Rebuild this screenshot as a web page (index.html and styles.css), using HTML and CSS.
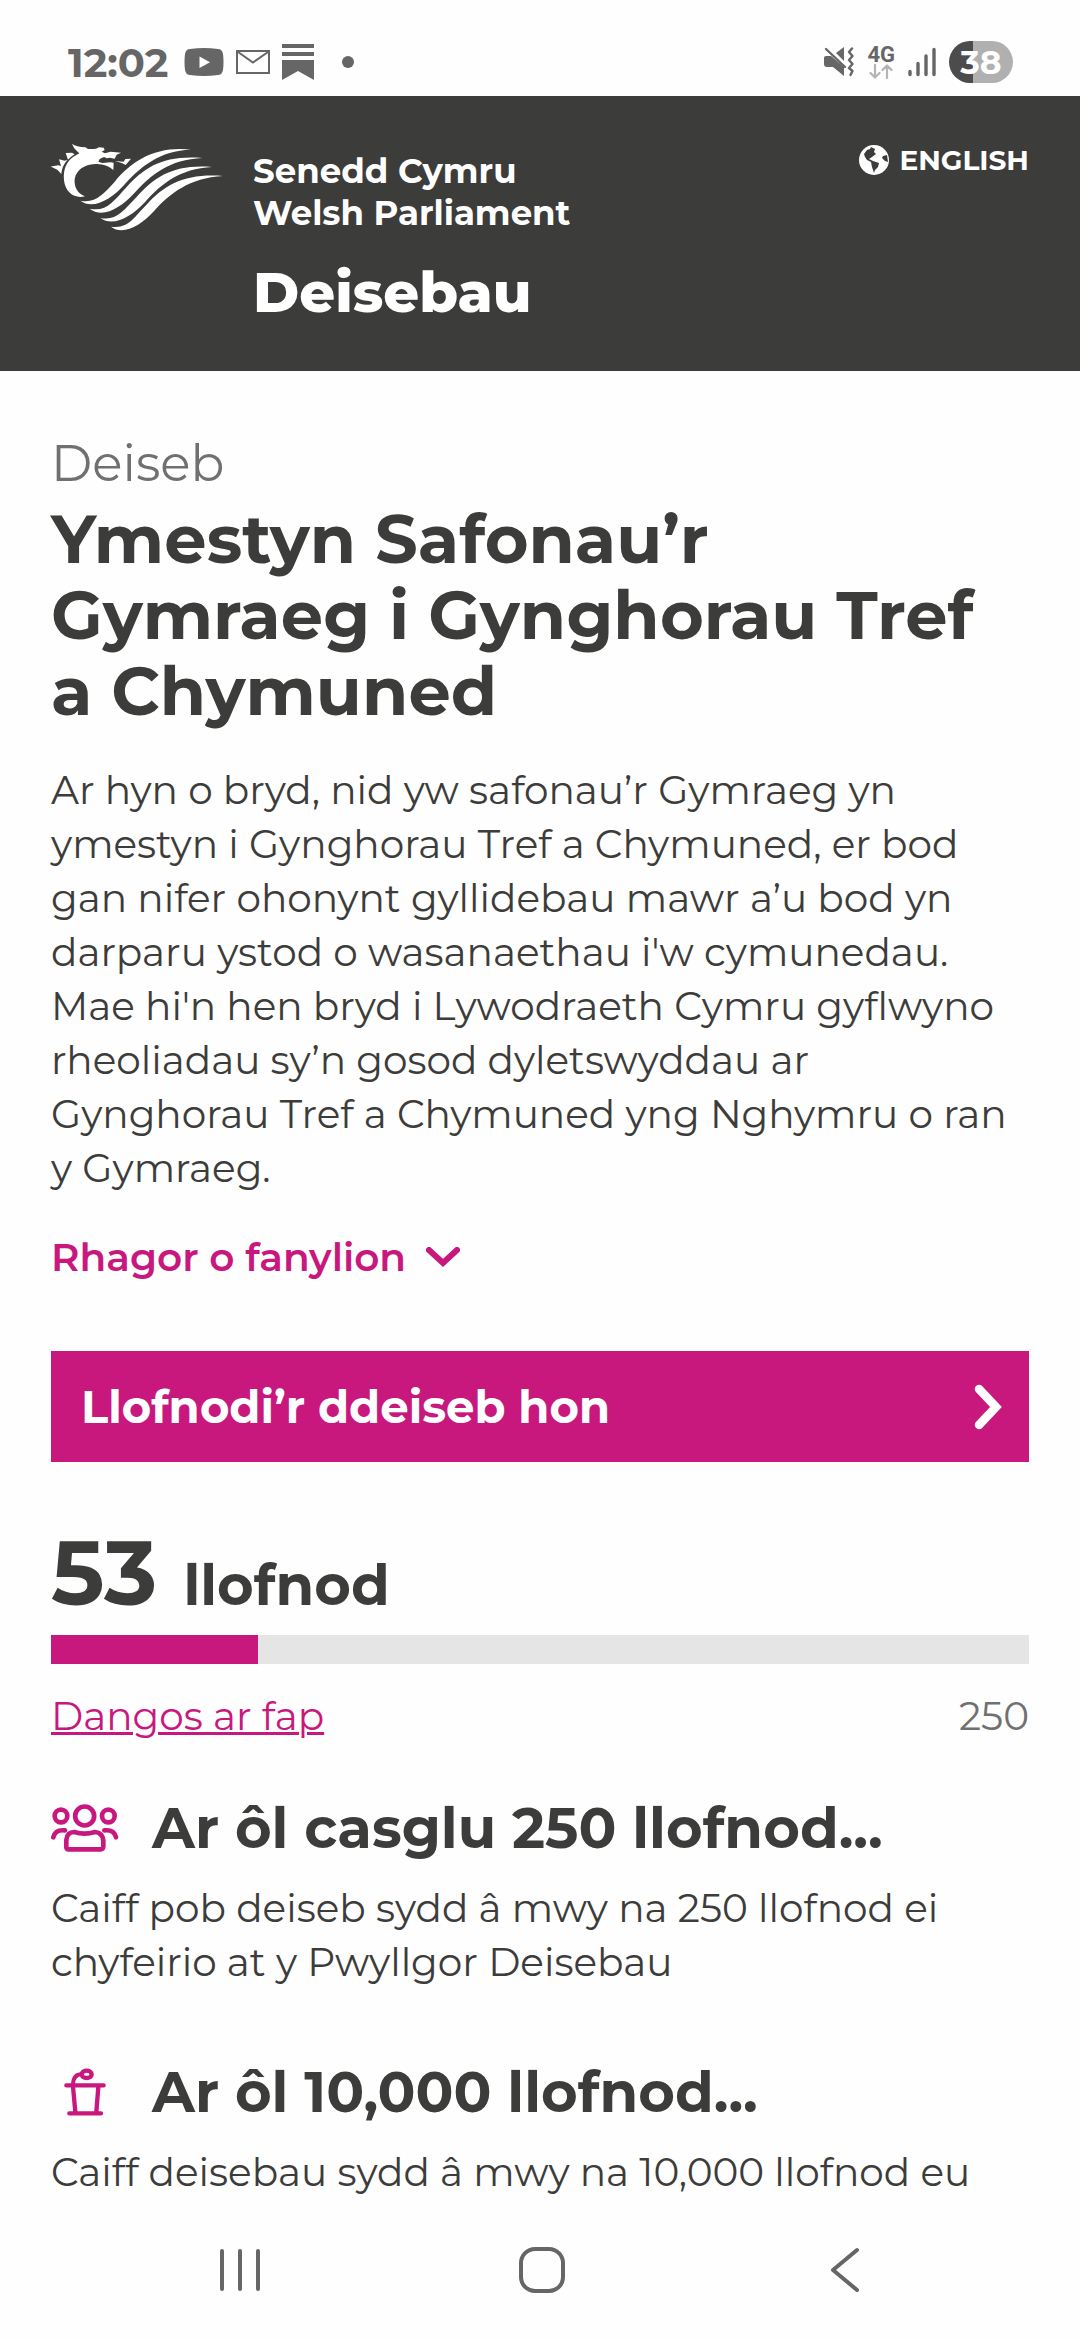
FILE: index.html
```html
<!DOCTYPE html>
<html lang="cy">
<head>
    <meta charset="UTF-8">
    <meta name="viewport" content="width=device-width, initial-scale=1.0">
    <title>Deisebau - Senedd Cymru</title>
    <link rel="stylesheet" href="styles.css">
</head>
<body>
    <!-- Phone status bar -->
    <div class="status-bar">
        <div class="status-left">
            <span class="clock">12:02</span>
            <svg width="40" height="28" viewBox="0 0 40 28"><path fill="#666" d="M6 1Q20-1 34 1 38 1 39 6 40 14 39 22 38 27 34 27 20 29 6 27 2 27 1 22 0 14 1 6 2 1 6 1Z"/><path fill="#fff" d="M15.500 8.500V20L26 14.200Z"/></svg>
            <svg width="34" height="24" viewBox="0 0 34 24" fill="none" stroke="#666" stroke-width="2"><path d="M1 1H33V23H1Z"/><path d="M2 2 17 12.500 32 2"/></svg>
            <svg width="32" height="36" viewBox="0 0 32 36" fill="#666"><path d="M0 0H32V4H0ZM0 8H32V12H0ZM0 16H32V36L16 27 0 36Z"/></svg>
            <span class="dot"></span>
        </div>
        <div class="status-right">
            <svg width="30" height="30" viewBox="0 0 30 30"><path fill="#666" d="M2 9H7L20 20V29L9 20H3Q0 20 0 17V11Q0 9 2 9ZM12 6 20 0V14Z"/><path fill="none" stroke="#666" stroke-width="2.400" stroke-linecap="round" d="M2 2 21 20"/><path fill="none" stroke="#666" stroke-width="2.400" stroke-linecap="round" stroke-linejoin="round" d="M28 1.500 25 5 28.500 9 25 13 28.500 17 25 21 28.500 24 26.500 28"/></svg>
            <div class="network">
                <span>4G</span>
                <svg width="24" height="15" viewBox="0 0 24 15" fill="none" stroke="#b4b4b4" stroke-width="2.200" stroke-linecap="round" stroke-linejoin="round"><path d="M6 1V13M1.500 9 6 13.500 10.500 9M18 14V2M13.500 6 18 1.500 22.500 6"/></svg>
            </div>
            <svg width="28" height="30" viewBox="0 0 28 30" stroke="#666" stroke-width="3.400" stroke-linecap="round"><path d="M2 24.500V27.500M10 16.500V27.500M18 9V27.500M26 2.500V27.500"/></svg>
            <span class="battery">38</span>
        </div>
    </div>

    <header class="site-header">
        <svg class="logo" viewBox="34 40 516 264" fill="#fff" role="img" aria-label="Senedd Cymru">
            <path d="M136 200C106 208 77 190 73 152 70 119 80 98 100 82L119 71Q109 62 103 55L97 42Q110 52 137 53L145 58Q157 59 169 57L178 53 192 54 195 61 186 66 196 71 213 66 244 69 231 75 225 87 210 84 202 86 193 82 180 88 176 96 188 100 213 98 222 99 221 121C203 105 182 103 166 103 133 105 110 121 105 148 103 172 113 191 136 200Z"/>
            <path d="M33 111 56 107 64 109 58 89 75 93 85 90 78 70 97 69 105 74C80 91 68 106 65 133L53 120Z"/>
            <path d="M226 94 252 96 257 88 274 87 258 106 246 100Z"/>
            <path d="M122 213C166 222 192 194 224 158 278 91 349 49 454 60 361 62 301 112 254 165 217 207 160 242 122 213Z"/>
            <path d="M150 237C201 247 221 215 259 174 315 112 371 76 488 85 389 89 334 136 285 189 244 234 189 268 150 237Z"/>
            <path d="M182 265C229 274 249 246 290 203 347 138 407 103 517 112 421 116 364 164 317 216 276 261 220 293 182 265Z"/>
            <path d="M214 291C267 299 284 261 319 227 378 161 439 131 551 139 449 144 391 192 344 243 303 289 249 318 214 291Z"/>
        </svg>
        <div class="brand">
            <p class="brand-name">Senedd Cymru<br>Welsh Parliament</p>
            <p class="brand-section">Deisebau</p>
        </div>
        <a class="language" href="#">
            <svg width="30" height="30" viewBox="0 0 30 30"><circle cx="15" cy="15" r="15" fill="#fff"/><path fill="#3c3c3a" d="M5 9 8 5 11 4 12 2 16 4 15 7 17 9 13 12 10 14 14 16 20 18 19 22 16 25 15 28 13 22 12 17 8 15 6 12ZM24 11 28 10 29 17 26 16 23 13Z"/></svg>
            <span>ENGLISH</span>
        </a>
    </header>

    <main class="petition">
        <p class="label">Deiseb</p>
        <h1>Ymestyn Safonau’r<br>Gymraeg i Gynghorau Tref<br>a Chymuned</h1>
        <p class="text">Ar hyn o bryd, nid yw safonau’r Gymraeg yn<br>
            ymestyn i Gynghorau Tref a Chymuned, er bod<br>
            gan nifer ohonynt gyllidebau mawr a’u bod yn<br>
            darparu ystod o wasanaethau i'w cymunedau.<br>
            Mae hi'n hen bryd i Lywodraeth Cymru gyflwyno<br>
            rheoliadau sy’n gosod dyletswyddau ar<br>
            Gynghorau Tref a Chymuned yng Nghymru o ran<br>
            y Gymraeg.</p>

        <button class="more" type="button">
            Rhagor o fanylion
            <svg width="34" height="21" viewBox="0 0 34 21" fill="none" stroke="#c8187d" stroke-width="6" stroke-linecap="round"><path d="M3 3 17 16 31 3"/></svg>
        </button>

        <a class="sign" href="#">
            Llofnodi’r ddeiseb hon
            <svg width="28" height="46" viewBox="0 0 28 46" fill="none" stroke="#fff" stroke-width="8.500" stroke-linecap="round"><path d="M5 5 22 23 5 41"/></svg>
        </a>

        <p class="count"><span class="number">53</span> <span class="unit">llofnod</span></p>
        <div class="bar" role="progressbar" aria-label="Llofnodion" aria-valuenow="53" aria-valuemin="0" aria-valuemax="250">
            <div class="bar-fill" style="width: 21.2%"></div>
        </div>
        <div class="bar-info">
            <a href="#">Dangos ar fap</a>
            <span>250</span>
        </div>

        <section class="step">
            <h2>
                <svg width="68" height="48" viewBox="0 0 204 144" fill="none" stroke="#c8187d" stroke-width="14" stroke-linecap="round"><circle cx="101" cy="36" r="28.500"/><circle cx="30" cy="36" r="19"/><circle cx="172" cy="36" r="19"/><path d="M7 100Q12 76 42 79M195 100Q190 76 160 79"/><path stroke-linejoin="round" d="M52 136Q45 136 46 126V108Q48 84 70 84 100 94 132 84 155 86 157 110V126Q157 136 149 136Z"/></svg>
                Ar ôl casglu 250 llofnod...
            </h2>
            <p class="text">Caiff pob deiseb sydd â mwy na 250 llofnod ei<br>chyfeirio at y Pwyllgor Deisebau</p>
        </section>

        <section class="step">
            <h2>
                <svg width="68" height="48" viewBox="0 0 204 144" fill="none" stroke="#c8187d" stroke-width="13" stroke-linecap="round"><path d="M46 52H158M55 136H150M66 56 73 132M142 56 136 132"/><path stroke-width="12" d="M66 48Q68 19 91 19"/><ellipse cx="107" cy="19" rx="15" ry="11"/></svg>
                Ar ôl 10,000 llofnod...
            </h2>
            <p class="text">Caiff deisebau sydd â mwy na 10,000 llofnod eu</p>
        </section>
    </main>

    <!-- Phone navigation -->
    <nav class="phone-nav">
        <button type="button" aria-label="Recent apps">
            <svg width="48" height="48" viewBox="0 0 48 48" fill="none" stroke="#666" stroke-width="4" stroke-linecap="round"><path d="M6 5V43M24 5V43M42 5V43"/></svg>
        </button>
        <button type="button" aria-label="Home">
            <svg width="48" height="48" viewBox="0 0 48 48" fill="none" stroke="#666" stroke-width="4"><rect x="3" y="3" width="42" height="42" rx="14"/></svg>
        </button>
        <button type="button" aria-label="Back">
            <svg width="48" height="48" viewBox="0 0 48 48" fill="none" stroke="#666" stroke-width="4" stroke-linecap="round" stroke-linejoin="round"><path d="M37 4 13 24 37 44"/></svg>
        </button>
    </nav>
</body>
</html>
```
FILE: styles.css
```css
:root {
    --accent-color: #c8187d;
    --dark-color: #3c3c3a;
    --grey-color: #707070;
    --status-color: #666666;
}

* {
    box-sizing: border-box;
}

body {
    font-family: Montserrat, Inter, sans-serif;
    background-color: #fefefe;
    color: var(--dark-color);
    margin: 0;
    min-height: 100vh;
    display: flex;
    flex-direction: column;
}

h1, h2, p {
    margin: 0;
}

svg {
    display: block;
    flex: none;
}

button {
    font-family: inherit;
    background: none;
    border: none;
    padding: 0;
    cursor: pointer;
}

/* Status bar */
.status-bar {
    padding: 28px 67px 0 68px;
    display: flex;
    justify-content: space-between;
    color: var(--status-color);
}

.status-left,
.status-right {
    height: 68px;
    display: flex;
    align-items: center;
}

.status-left {
    gap: 12px;
}

.status-right {
    gap: 13px;
}

.clock {
    font-size: 40px;
    font-weight: 700;
    margin-right: 4px;
}

.dot {
    width: 12px;
    height: 12px;
    margin-left: 16px;
    border-radius: 50%;
    background-color: var(--status-color);
}

.network {
    display: flex;
    flex-direction: column;
    align-items: center;
    font-family: Roboto, sans-serif;
    font-size: 22px;
    line-height: 18px;
    font-weight: 700;
}

.battery {
    width: 64px;
    height: 42px;
    border-radius: 21px;
    background: linear-gradient(to right, #4c4c4c 24px, #b0b0b0 24px);
    color: #fff;
    font-size: 33px;
    line-height: 42px;
    font-weight: 700;
    text-align: center;
}

/* Header */
.site-header {
    padding: 47px 51px 45px;
    display: flex;
    align-items: flex-start;
    background-color: var(--dark-color);
    color: #fff;
}

.logo {
    width: 172px;
    height: 88px;
}

.brand {
    flex: 1;
    padding: 7px 0 0 30px;
}

.brand-name {
    font-size: 34px;
    line-height: 42px;
    font-weight: 700;
}

.brand-section {
    margin-top: 24px;
    font-size: 56px;
    line-height: 68px;
    font-weight: 800;
}

.language {
    display: flex;
    align-items: center;
    gap: 10px;
    color: #fff;
    font-size: 28px;
    line-height: 34px;
    font-weight: 700;
    text-decoration: none;
}

/* Petition */
.petition {
    flex: 1;
    padding: 60px 51px 0;
}

.label {
    color: var(--grey-color);
    font-size: 50px;
    line-height: 66px;
}

h1 {
    margin-top: 4px;
    font-size: 67px;
    line-height: 76px;
    font-weight: 700;
}

.text {
    font-size: 39px;
    line-height: 54px;
    white-space: nowrap;
}

h1 + .text {
    margin-top: 34px;
}

.more {
    display: flex;
    align-items: center;
    gap: 20px;
    margin-top: 35px;
    color: var(--accent-color);
    font-size: 39px;
    line-height: 54px;
    font-weight: 600;
}

.sign {
    display: flex;
    align-items: center;
    justify-content: space-between;
    height: 111px;
    margin-top: 67px;
    padding: 0 27px 0 30px;
    background-color: var(--accent-color);
    color: #fff;
    font-size: 45px;
    font-weight: 700;
    text-decoration: none;
}

.count {
    display: flex;
    align-items: baseline;
    gap: 26px;
    margin-top: 61px;
    line-height: 100px;
    font-weight: 700;
}

.number {
    font-size: 90px;
}

.unit {
    font-size: 56px;
}

.bar {
    height: 29px;
    background-color: #e5e5e5;
}

.bar-fill {
    height: 100%;
    background-color: var(--accent-color);
}

.bar-info {
    display: flex;
    justify-content: space-between;
    margin: 25px 0 46px;
    color: var(--grey-color);
    font-size: 39px;
    line-height: 54px;
}

.bar-info a {
    color: var(--accent-color);
    text-decoration-thickness: 3px;
}

/* Steps */
.step + .step {
    margin-top: 64px;
}

.step h2 {
    display: flex;
    align-items: center;
    gap: 33px;
    margin-bottom: 14px;
    font-size: 56px;
    line-height: 78px;
    font-weight: 700;
}

/* Phone navigation */
.phone-nav {
    display: flex;
    justify-content: space-between;
    padding: 0 212px 46px 216px;
}
```
